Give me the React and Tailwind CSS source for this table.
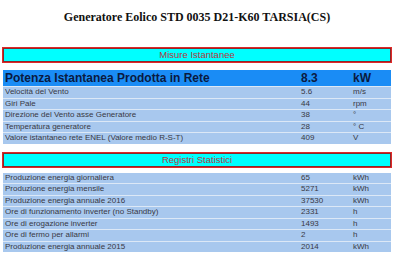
import React from 'react';

const misure = [
  ['Velocità del Vento', '5.6', 'm/s'],
  ['Giri Pale', '44', 'rpm'],
  ['Direzione del Vento asse Generatore', '38', '°'],
  ['Temperatura generatore', '28', '° C'],
  ['Valore istantaneo rete ENEL (Valore medio R-S-T)', '409', 'V'],
];

const registri = [
  ['Produzione energia giornaliera', '65', 'kWh'],
  ['Produzione energia mensile', '5271', 'kWh'],
  ['Produzione energia annuale 2016', '37530', 'kWh'],
  ['Ore di funzionamento inverter (no Standby)', '2331', 'h'],
  ['Ore di erogazione inverter', '1493', 'h'],
  ['Ore di fermo per allarmi', '2', 'h'],
  ['Produzione energia annuale 2015', '2014', 'kWh'],
];

const Banner = ({ label }) => (
  <div className="mx-[2px] h-[16px] bg-[#00ffff] border border-[#e02828] shadow-[inset_0_0_0_1px_#8a2a2a] flex items-center justify-center text-[9.5px] text-[#b03a42] leading-none">
    {label}
  </div>
);

const Row = ({ cells, big }) => (
  <div
    className={`grid grid-cols-[295px_51px_1fr] gap-x-px ${
      big ? 'h-[16px] bg-[#1a8cf5]' : 'h-[10.5px] bg-[#a8c8ee]'
    }`}
  >
    {cells.map((c, i) => (
      <div
        key={i}
        className={`flex items-center px-[2px] overflow-hidden whitespace-nowrap ${
          big
            ? 'text-[12px] font-bold text-[#0a1a40] bg-[#1a8cf5]'
            : 'text-[8px] text-[#383844] bg-[#a8c8ee]'
        }`}
      >
        {c}
      </div>
    ))}
  </div>
);

const Table = ({ rows, head }) => (
  <div className="mx-[3px] bg-[#dce8f6] flex flex-col gap-y-px">
    {head && <Row cells={head} big />}
    {rows.map((r, i) => (
      <Row key={i} cells={r} />
    ))}
  </div>
);

export default function App() {
  return (
    <div className="w-[394px] h-[257px] bg-white overflow-hidden" style={{ fontFamily: '"Liberation Sans", Arial, sans-serif' }}>
      <h1
        className="text-center font-bold text-[12px] text-[#111] pt-[8px] h-[47px]"
        style={{ fontFamily: '"Liberation Serif", "Times New Roman", serif' }}
      >
        Generatore Eolico STD 0035 D21-K60 TARSIA(CS)
      </h1>
      <Banner label="Misure Istantanee" />
      <div className="h-[7px]" />
      <Table head={['Potenza Istantanea Prodotta in Rete', '8.3', 'kW']} rows={misure} />
      <div className="h-[8px]" />
      <Banner label="Registri Statistici" />
      <div className="h-[5px]" />
      <Table rows={registri} />
    </div>
  );
}
